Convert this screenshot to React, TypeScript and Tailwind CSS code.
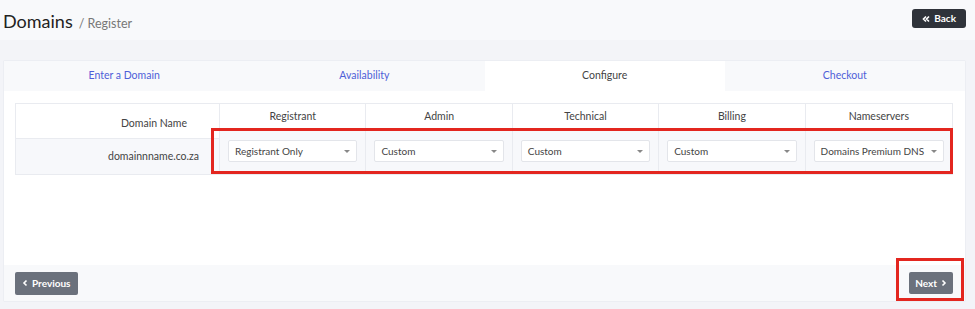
import React from "react";

const font = { fontFamily: "Lato, 'Open Sans', 'Liberation Sans', sans-serif" };

function Select({ value }: { value: string }) {
  return (
    <div className="flex h-[22px] items-center justify-between rounded-[2px] border border-[#e3e5ea] bg-white pl-[6px] pr-[6px] text-[10px] text-[#444]">
      <span>{value}</span>
      <span className="h-0 w-0 border-l-[3px] border-r-[3px] border-t-[3px] border-l-transparent border-r-transparent border-t-[#888]" />
    </div>
  );
}

export default function App() {
  const cols = [
    { h: "Registrant", v: "Registrant Only" },
    { h: "Admin", v: "Custom" },
    { h: "Technical", v: "Custom" },
    { h: "Billing", v: "Custom" },
    { h: "Nameservers", v: "Domains Premium DNS" },
  ];
  return (
    <div className="relative h-[309px] w-[975px] overflow-hidden bg-[#f3f4f8]" style={font}>
      <div className="flex h-[40px] items-start justify-between bg-[#f8f9fb] pl-[3px] pr-[9px]">
        <div className="flex items-baseline gap-[6px] pt-[12px]">
          <span className="text-[18px] leading-none text-[#222]">Domains</span>
          <span className="text-[12.5px] leading-none text-[#777]">/ Register</span>
        </div>
        <button className="mt-[9px] flex h-[19px] items-center gap-[4px] rounded-[3px] bg-[#2f333a] px-[10px] text-[10px] font-bold text-white">
          <svg width="8" height="8" viewBox="0 0 8 8" fill="none" stroke="white" strokeWidth="1.6">
            <path d="M4 1.5 L1.5 4 L4 6.5 M7 1.5 L4.5 4 L7 6.5" />
          </svg>
          Back
        </button>
      </div>

      <div className="ml-[3px] mt-[20px] w-[963px] overflow-hidden rounded-[2px] border border-[#eceef3] bg-white">
        <div className="grid h-[30px] grid-cols-4 text-[10.5px]">
          <div className="flex items-center justify-center bg-[#f8f9fb] text-[#4e5fd8]">Enter a Domain</div>
          <div className="flex items-center justify-center bg-[#f8f9fb] text-[#4e5fd8]">Availability</div>
          <div className="flex items-center justify-center bg-white text-[#444]">Configure</div>
          <div className="flex items-center justify-center bg-[#f8f9fb] text-[#4e5fd8]">Checkout</div>
        </div>

        <div className="h-[174px] px-[11px] pt-[12px]">
          <div className="flex w-[938px] text-[10.5px] text-[#444]">
            <div className="w-[204px] border border-r-0 border-[#e9ebf0]">
              <div className="flex h-[35px] items-center justify-end border-b border-[#e9ebf0] pr-[32px] pt-[6px]">Domain Name</div>
              <div className="flex h-[35px] items-center justify-end bg-[#f7f8fb] pr-[20px]">domainnname.co.za</div>
            </div>
            <div className="grid flex-1 grid-cols-5 border border-[#e9ebf0]">
              {cols.map((c, i) => (
                <div key={c.h} className={i < 4 ? "border-r border-[#e9ebf0]" : ""}>
                  <div className="flex h-[27px] items-center justify-center border-b border-[#e9ebf0]">{c.h}</div>
                  <div className="flex h-[43px] flex-col justify-center bg-[#f7f8fb] px-[8px] pb-[3px]">
                    <Select value={c.v} />
                  </div>
                </div>
              ))}
            </div>
          </div>
        </div>

        <div className="flex h-[36px] items-center justify-between bg-[#f8f9fb] pl-[11px] pr-[12px]">
          <button className="flex h-[23px] items-center gap-[4px] rounded-[2px] bg-[#6b717c] px-[7px] text-[10px] font-bold text-white">
            <svg width="6" height="8" viewBox="0 0 6 8" fill="none" stroke="white" strokeWidth="1.6">
              <path d="M4.5 1.5 L2 4 L4.5 6.5" />
            </svg>
            Previous
          </button>
          <button className="flex h-[22px] items-center gap-[4px] rounded-[2px] bg-[#6b717c] px-[6px] text-[10px] font-bold text-white">
            Next
            <svg width="6" height="8" viewBox="0 0 6 8" fill="none" stroke="white" strokeWidth="1.6">
              <path d="M1.5 1.5 L4 4 L1.5 6.5" />
            </svg>
          </button>
        </div>
      </div>

      <div className="pointer-events-none absolute left-[211px] top-[128px] h-[46px] w-[742px] border-[3px] border-[#e3261f]" />
      <div className="pointer-events-none absolute left-[896px] top-[258px] h-[43px] w-[68px] border-[3px] border-[#e3261f]" />
    </div>
  );
}
